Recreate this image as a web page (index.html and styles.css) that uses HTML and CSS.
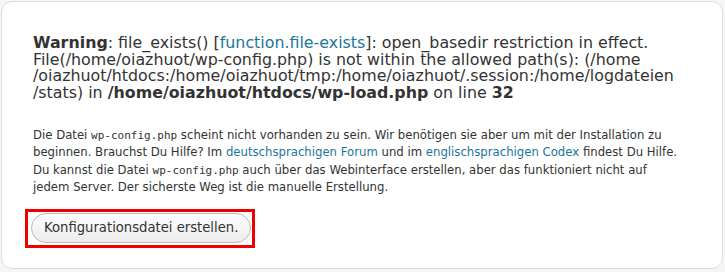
FILE: index.html
```html
<!DOCTYPE html>
<html>
<head>
<meta charset="utf-8">
<link rel="stylesheet" href="styles.css">
</head>
<body>
<div class="card">
  <p class="warning"><b>Warning</b>: file_exists() [<a href="#">function.file-exists</a>]: open_basedir restriction in effect.<br>File(/home/oiazhuot/wp-config.php) is not within the allowed path(s): (/home<br>/oiazhuot/htdocs:/home/oiazhuot/tmp:/home/oiazhuot/.session:/home/logdateien<br>/stats) in <b>/home/oiazhuot/htdocs/wp-load.php</b> on line <b>32</b></p>
  <p class="info">Die Datei <code>wp-config.php</code> scheint nicht vorhanden zu sein. Wir benötigen sie aber um mit der Installation zu<br>beginnen. Brauchst Du Hilfe? Im <a href="#">deutschsprachigen Forum</a> und im <a href="#">englischsprachigen Codex</a> findest Du Hilfe.<br>Du kannst die Datei <code>wp-config.php</code> auch über das Webinterface erstellen, aber das funktioniert nicht auf<br>jedem Server. Der sicherste Weg ist die manuelle Erstellung.</p>
  <div class="action">
    <div class="highlight"><span class="button">Konfigurationsdatei erstellen.</span></div>
  </div>
</div>
</body>
</html>
```
FILE: styles.css
```css
html, body {
  margin: 0;
  padding: 0;
  background: #f6f6f6;
}
body {
  padding: 1px 2px 1px 1px;
  font-family: "DejaVu Sans", Verdana, sans-serif;
  color: #333;
}
.card {
  background: #fff;
  border: 1px solid #dcdcdc;
  border-radius: 11px;
  height: 268px;
  box-sizing: border-box;
  padding: 33px 10px 0 31px;
  white-space: nowrap;
}
a {
  color: #21759b;
  text-decoration: none;
}
.warning {
  margin: 0;
  font-size: 15.85px;
  line-height: 16.5px;
}
.info {
  margin: 25.5px 0 0;
  font-size: 11.7px;
  line-height: 17.6px;
}
code {
  font-family: "DejaVu Sans Mono", monospace;
  font-size: 11px;
}
.action {
  margin-top: 12px;
  margin-left: -8px;
  display: flex;
}
.highlight {
  border: 3px solid #f20000;
  padding: 1px 1px 2px 3px;
}
.button {
  display: block;
  padding: 6px 12px 6px 12px;
  font-size: 13.2px;
  line-height: 16px;
  color: #333;
  border: 1px solid #bbb;
  border-radius: 15px;
  background: linear-gradient(#fefefe, #ececec);
}
```
